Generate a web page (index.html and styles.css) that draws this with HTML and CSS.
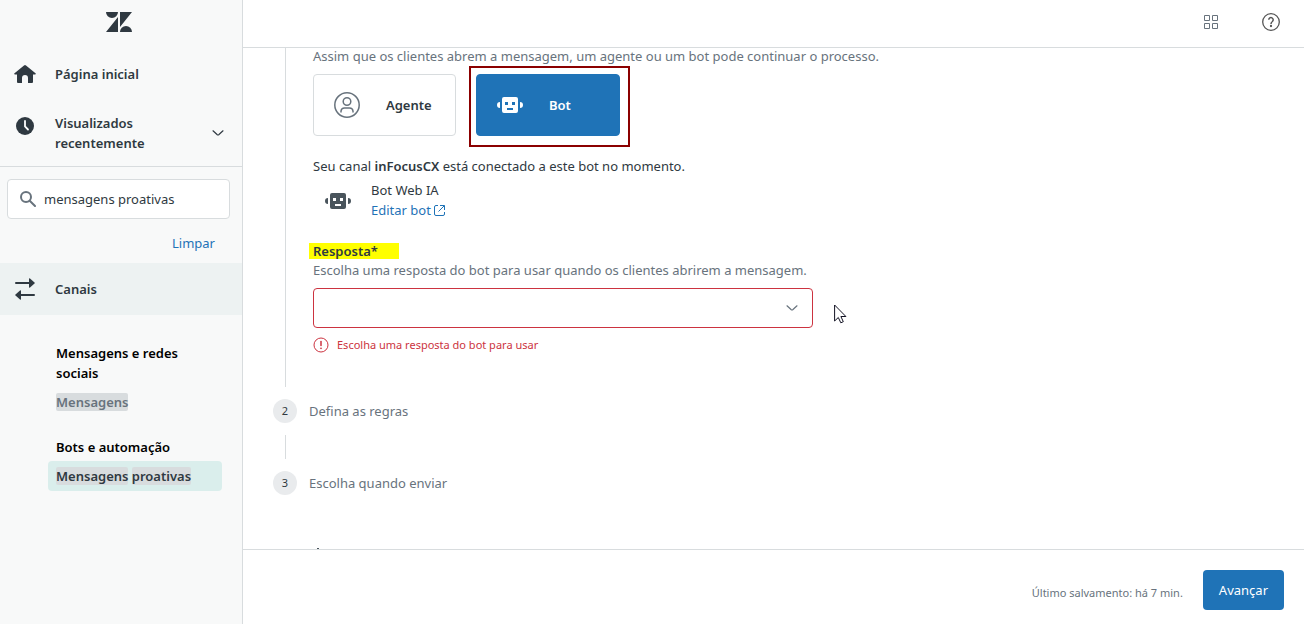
FILE: index.html
```html
<!DOCTYPE html>
<html lang="pt-BR">
<head>
    <meta charset="UTF-8">
    <meta name="viewport" content="width=device-width, initial-scale=1.0">
    <title>Mensagens proativas</title>
    <link rel="stylesheet" href="styles.css">
</head>
<body>
<aside class="sidebar">
    <div class="logo">
        <svg width="26" height="20" viewBox="0 0 26 20" fill="#2f3941" role="img" aria-label="Logo">
            <path d="M0 0h12a6 6 0 0 1-12 0zM12 5v15H0zM14 0h12L14 15zM14 20a6 6 0 0 1 12 0z"/>
        </svg>
    </div>
    <nav class="main-nav">
        <a href="#" class="nav-item">
            <svg width="22" height="18" viewBox="0 0 22 18" fill="#2f3941">
                <path d="M10 .5q1-.8 2 0l9.500 7.800q.8.900-.5 1.200H19v7.500q0 1-1 1h-4v-5a3 3 0 0 0-6 0v5H4q-1 0-1-1V9.500H1Q-.3 9.200.5 8.300z"/>
            </svg>
            <span>Página inicial</span>
        </a>
        <a href="#" class="nav-item nav-recent">
            <svg width="22" height="18" viewBox="0 0 22 18">
                <circle cx="11" cy="9" r="9" fill="#2f3941"/>
                <path d="M11 4v5.500l3 3" fill="none" stroke="#fff" stroke-width="1.800" stroke-linecap="round"/>
            </svg>
            <span>Visualizados recentemente</span>
            <svg width="12" height="6" viewBox="0 0 12 6" fill="none" stroke="#2f3941" stroke-width="1.200" stroke-linecap="round">
                <path d="M1 .8l4.300 3.900q.7.600 1.400 0L11 .8"/>
            </svg>
        </a>
    </nav>
    <div class="search">
        <label class="search-box">
            <svg width="16" height="16" viewBox="0 0 16 16" fill="none" stroke="#68737d" stroke-width="2">
                <circle cx="6" cy="6" r="5"/>
                <path d="M9.700 9.700l5.300 5.300" stroke-linecap="round"/>
            </svg>
            <input type="text" value="mensagens proativas" aria-label="Pesquisar">
        </label>
        <a href="#" class="clear">Limpar</a>
    </div>
    <a href="#" class="nav-item nav-section">
        <svg width="22" height="22" viewBox="0 0 22 22">
            <path d="M2 5h14M6 17h14" stroke="#2f3941" stroke-width="2" stroke-linecap="round"/>
            <path d="M15 1q0-1.200 1-.6l4.500 4q.7.600 0 1.200l-4.500 4q-1 .6-1-.6zM7 13q0-1.200-1-.6l-4.500 4q-.7.600 0 1.200l4.500 4q1 .6 1-.6z" fill="#2f3941"/>
        </svg>
        <span>Canais</span>
    </a>
    <nav class="sub-nav">
        <h2>Mensagens e redes sociais</h2>
        <a href="#"><mark>Mensagens</mark></a>
        <h2>Bots e automação</h2>
        <a href="#" class="active"><mark>Mensagens</mark> <mark>proativas</mark></a>
    </nav>
</aside>

<div class="page">
    <header class="topbar">
        <button class="icon-btn" aria-label="Produtos">
            <svg width="14" height="14" viewBox="0 0 14 14" fill="none" stroke="#68737d">
                <path d="M.5.500h5v5h-5zM8.500.500h5v5h-5zM.5 8.500h5v5h-5zM8.500 8.500h5v5h-5z"/>
            </svg>
        </button>
        <button class="icon-btn" aria-label="Ajuda">
            <svg width="18" height="18" viewBox="0 0 18 18" fill="none" stroke="#555" stroke-width="1.300">
                <circle cx="9" cy="9" r="8.300"/>
                <path d="M6.800 6.800a2.200 2.200 0 1 1 3.600 1.700Q9 9.500 9 11" stroke-width="1.500"/>
                <circle cx="9" cy="13" r=".5" fill="#555"/>
            </svg>
        </button>
    </header>

    <main class="content">
        <section class="step-body">
            <p class="hint intro">Assim que os clientes abrem a mensagem, um agente ou um bot pode continuar o processo.</p>
            <div class="choices">
                <button class="choice">
                    <svg width="26" height="26" viewBox="0 0 26 26" fill="none" stroke="#68737d" stroke-width="1.500">
                        <circle cx="13" cy="13" r="12.200"/>
                        <circle cx="13" cy="9.500" r="3.800"/>
                        <path d="M7 20.500v-1.500a3.500 3.500 0 0 1 3.500-3h5a3.500 3.500 0 0 1 3.500 3v1.500"/>
                    </svg>
                    <span>Agente</span>
                </button>
                <div class="outline">
                    <button class="choice selected">
                        <svg width="26" height="16" viewBox="0 0 26 16" fill="currentColor">
                            <path fill-rule="evenodd" d="M7 0h12q2 0 2 2v12q0 2-2 2H7q-2 0-2-2V2q0-2 2-2zM8 5v3h3V5zM15 5v3h3V5zM10 11v2h6v-2z"/>
                            <path d="M3 5v6Q0 11 0 8t3-3zM23 5v6q3 0 3-3t-3-3z"/>
                        </svg>
                        <span>Bot</span>
                    </button>
                </div>
            </div>
            <p>Seu canal <strong>inFocusCX</strong> está conectado a este bot no momento.</p>
            <div class="bot">
                <svg width="26" height="16" viewBox="0 0 26 16" fill="#49545c">
                    <path fill-rule="evenodd" d="M7 0h12q2 0 2 2v12q0 2-2 2H7q-2 0-2-2V2q0-2 2-2zM8 5v3h3V5zM15 5v3h3V5zM10 11v2h6v-2z"/>
                    <path d="M3 5v6Q0 11 0 8t3-3zM23 5v6q3 0 3-3t-3-3z"/>
                </svg>
                <div>
                    <div>Bot Web IA</div>
                    <a href="#">Editar bot
                        <svg width="11" height="11" viewBox="0 0 11 11" fill="none" stroke="#1f73b7">
                            <path d="M4 .5H2Q.5.500.5 2v7q0 1.500 1.500 1.500h7q1.500 0 1.500-1.500V7M6 .5h4.500V5M10.300.700L4.500 6.500"/>
                        </svg>
                    </a>
                </div>
            </div>
            <label class="field-label" for="resposta">Resposta*</label>
            <p class="hint">Escolha uma resposta do bot para usar quando os clientes abrirem a mensagem.</p>
            <div class="select-wrap">
                <select id="resposta" aria-describedby="erro">
                    <option value=""></option>
                </select>
                <svg class="chevron" width="12" height="6" viewBox="0 0 12 6" fill="none" stroke="#68737d" stroke-width="1.200" stroke-linecap="round">
                    <path d="M1 .8l4.300 3.900q.7.600 1.400 0L11 .8"/>
                </svg>
                <svg class="cursor" width="13" height="20" viewBox="0 0 13 20" fill="#fff" stroke="#112">
                    <path d="M.6 1v16l3.700-3.500 2.500 5.300 2.500-1.100L6.900 12.500h5z"/>
                </svg>
            </div>
            <p class="error" id="erro">
                <svg width="16" height="16" viewBox="0 0 16 16" fill="none" stroke="#cc3340">
                    <circle cx="8" cy="8" r="7"/>
                    <path d="M8 4.500v4" stroke-width="1.500" stroke-linecap="round"/>
                    <circle cx="8" cy="11.300" r=".5"/>
                </svg>
                Escolha uma resposta do bot para usar
            </p>
        </section>
        <div class="step"><span class="num">2</span>Defina as regras</div>
        <div class="line"></div>
        <div class="step"><span class="num">3</span>Escolha quando enviar</div>
        <div class="peek"></div>
    </main>

    <footer class="footer">
        <span class="saved">Último salvamento: há 7 min.</span>
        <button class="next">Avançar</button>
    </footer>
</div>
</body>
</html>
```
FILE: styles.css
```css
* {
    box-sizing: border-box;
}
body {
    margin: 0;
    display: flex;
    height: 100vh;
    font-family: "Noto Sans", "Open Sans", sans-serif;
    font-size: 13px;
    line-height: 20px;
    color: #2f3941;
    background-color: #fff;
}
a {
    color: #1f73b7;
    text-decoration: none;
}
p, h2 {
    margin: 0;
}
svg {
    flex: none;
}
button, input, select {
    font: inherit;
}
button {
    cursor: pointer;
}

/* Sidebar */
.sidebar {
    flex: 0 0 243px;
    background-color: #f8f9f9;
    border-right: 1px solid #d8dcde;
}
.logo {
    display: flex;
    justify-content: center;
    padding: 12px 4px 12px 0;
}
.main-nav {
    border-bottom: 1px solid #d8dcde;
}
.nav-item {
    display: flex;
    align-items: center;
    gap: 19px;
    padding: 20px 18px 20px 14px;
    font-weight: 600;
    color: #2f3941;
}
.nav-recent {
    padding-top: 9px;
    padding-bottom: 13px;
}
.nav-recent > svg:first-child {
    align-self: flex-start;
    margin-top: 4px;
}
.nav-recent span {
    flex: 1;
}
.search {
    padding: 12px 12px 10px 7px;
}
.search-box {
    display: flex;
    align-items: center;
    gap: 8px;
    height: 40px;
    padding: 0 12px;
    border: 1px solid #d8dcde;
    border-radius: 4px;
    background-color: #fff;
}
.search-box input {
    width: 100%;
    min-width: 0;
    padding: 0;
    border: 0;
    outline: 0;
    color: #2f3941;
}
.clear {
    display: block;
    margin: 14px 15px 0 0;
    text-align: right;
}
.nav-section {
    padding-top: 16px;
    padding-bottom: 16px;
    background-color: #edf2f2;
}
.nav-section svg {
    margin: -1px 0;
}
.sub-nav {
    padding: 28px 20px 0 48px;
}
.sub-nav h2 {
    padding: 0 8px;
    font-size: 13px;
    font-weight: 600;
    color: #000;
}
.sub-nav a {
    display: block;
    margin: 4px 0;
    padding: 5px 8px;
    border-radius: 4px;
    font-weight: 600;
    color: #68737d;
}
.sub-nav a + h2 {
    margin-top: 20px;
}
.sub-nav a.active {
    background-color: #daeeec;
    color: #2f3941;
}
.sub-nav mark {
    border-radius: 2px;
    background-color: #d8dcde;
    color: inherit;
}

/* Page */
.page {
    flex: 1;
    min-width: 0;
    display: flex;
    flex-direction: column;
}
.topbar {
    flex: 0 0 48px;
    display: flex;
    align-items: center;
    justify-content: flex-end;
    gap: 44px;
    padding: 0 24px 4px 0;
    border-bottom: 1px solid #d8dcde;
}
.icon-btn {
    display: flex;
    padding: 0;
    border: 0;
    background: none;
}
.content {
    flex: 1;
    min-height: 0;
    overflow: hidden;
    padding-left: 30px;
}
.step-body {
    margin: 0 0 12px 12px;
    padding: 0 0 32px 27px;
    border-left: 1px solid #d8dcde;
}
.hint {
    color: #68737d;
}
.intro {
    margin-bottom: 2px;
    line-height: 16px;
}
.choices {
    display: flex;
    align-items: flex-start;
    gap: 13px;
    height: 90px;
}
.choice {
    display: flex;
    align-items: center;
    gap: 26px;
    width: 143px;
    height: 62px;
    margin-top: 8px;
    padding: 0 20px;
    border: 1px solid #d8dcde;
    border-radius: 4px;
    background-color: #fff;
    font-weight: 600;
    color: #2f3941;
}
.outline {
    padding: 6px 8px 9px 5px;
    border: 2px solid #8b0000;
}
.choice.selected {
    width: 144px;
    margin: 0;
    border-color: #1f73b7;
    background-color: #1f73b7;
    color: #fff;
}
strong {
    font-weight: 600;
}
.bot {
    display: flex;
    align-items: center;
    gap: 20px;
    margin: 4px 0 23px;
    padding-left: 12px;
}
.bot svg {
    margin-top: 2px;
}
.bot a svg {
    vertical-align: -1px;
    margin: 0;
}
.field-label {
    display: block;
    width: 90px;
    margin: 0 0 1px -4px;
    padding-left: 4px;
    line-height: 16px;
    font-weight: 600;
    background-color: #ff0;
}
.select-wrap {
    position: relative;
    max-width: 500px;
    margin: 8px 0 7px;
}
.select-wrap select {
    display: block;
    appearance: none;
    width: 100%;
    height: 40px;
    padding: 0 32px 0 12px;
    border: 1px solid #cc3340;
    border-radius: 4px;
    background-color: #fff;
}
.select-wrap .chevron {
    position: absolute;
    right: 15px;
    top: 17px;
    pointer-events: none;
}
.cursor {
    position: absolute;
    left: 521px;
    top: 16px;
}
.error {
    display: flex;
    align-items: center;
    gap: 8px;
    font-size: 11px;
    color: #cc3340;
}
.step {
    display: flex;
    align-items: center;
    gap: 12px;
    color: #68737d;
}
.num {
    width: 24px;
    height: 24px;
    border-radius: 50%;
    background-color: #e9ebed;
    color: #2f3941;
    font-size: 11px;
    line-height: 24px;
    text-align: center;
}
.line {
    height: 24px;
    margin: 12px;
    border-left: 1px solid #d8dcde;
}
/* top of the next block, just above the footer */
.peek {
    width: 2px;
    height: 1px;
    margin: 53px 0 0 44px;
    background-color: #49545c;
}
.footer {
    flex: 0 0 75px;
    display: flex;
    align-items: center;
    justify-content: flex-end;
    gap: 20px;
    padding: 6px 20px 0 0;
    border-top: 1px solid #d8dcde;
    font-size: 11px;
    color: #68737d;
}
.saved {
    padding-top: 6px;
}
.next {
    height: 40px;
    padding: 0 16px;
    border: 0;
    border-radius: 4px;
    background-color: #1f73b7;
    color: #fff;
    font-size: 13px;
}
```
